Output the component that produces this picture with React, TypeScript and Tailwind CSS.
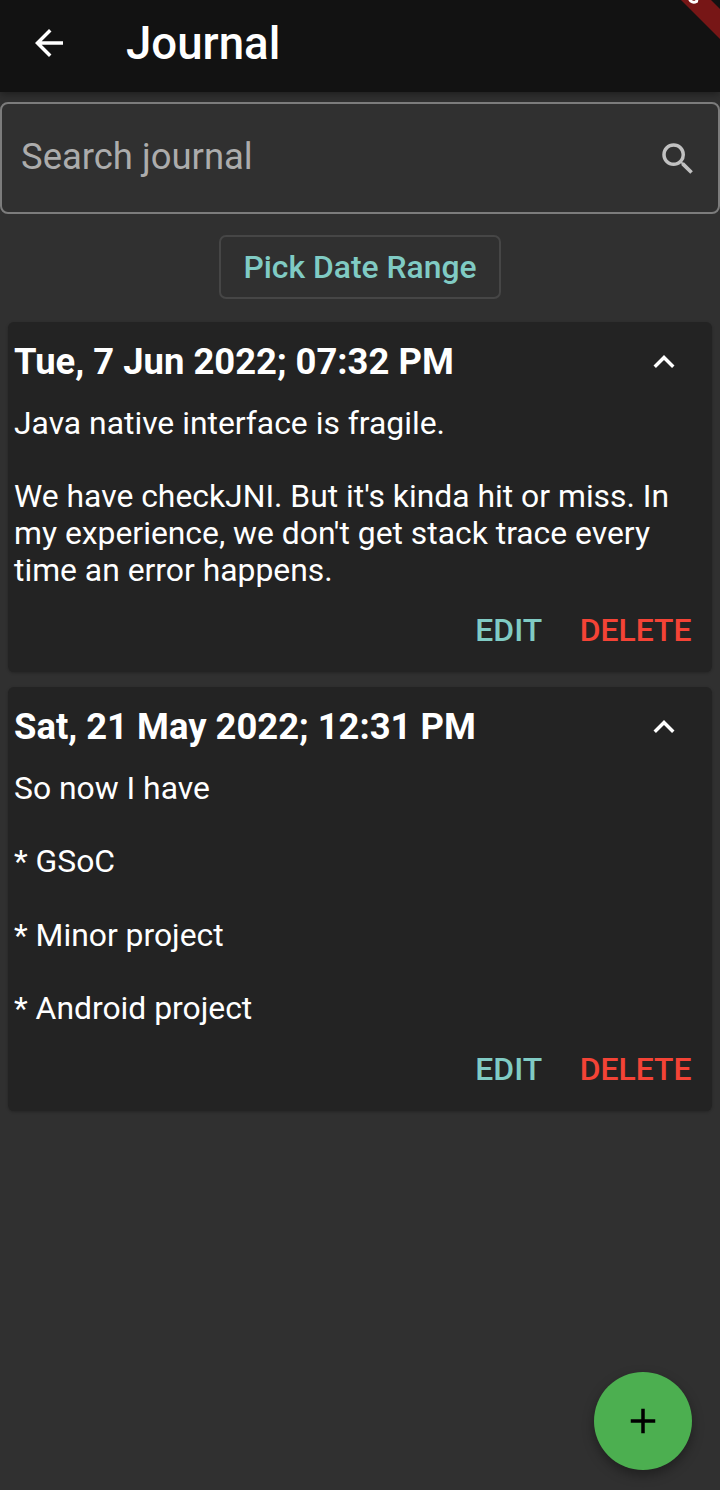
import React from "react";

type Entry = { title: string; lines: string[] };

const entries: Entry[] = [
  {
    title: "Tue, 7 Jun 2022; 07:32 PM",
    lines: [
      "Java native interface is fragile.",
      "",
      "We have checkJNI. But it's kinda hit or miss. In",
      "my experience, we don't get stack trace every",
      "time an error happens.",
    ],
  },
  {
    title: "Sat, 21 May 2022; 12:31 PM",
    lines: ["So now I have", "", "* GSoC", "", "* Minor project", "", "* Android project"],
  },
];

function EntryCard({ title, lines }: Entry) {
  return (
    <article className="rounded-[6px] bg-[#232323] pb-[10.5px] shadow-[0_1px_3px_rgba(0,0,0,0.25)]">
      <header className="flex h-[80px] items-center justify-between pl-[6px] pr-[27px]">
        <h2 className="whitespace-nowrap text-[36.42px] leading-[42px] font-bold">{title}</h2>
        <svg className="size-[42px]" viewBox="0 0 24 24" fill="currentColor">
          <path d="M12 8l-6 6 1.41 1.41L12 10.83l4.59 4.58L18 14z" />
        </svg>
      </header>
      <div className="pl-[6px] pt-[3px] text-[31.85px] leading-[36.65px]">
        {lines.map((line, i) => (
          <p key={i} className="h-[36.65px] whitespace-nowrap">{line}</p>
        ))}
      </div>
      <div className="mt-[12.5px] flex h-[61px] items-center justify-end gap-[37.5px] pr-[20.5px] text-[31.9px] font-medium">
        <button className="text-[#80cbc4]">EDIT</button>
        <button className="text-[#f44336]">DELETE</button>
      </div>
    </article>
  );
}

export default function App() {
  return (
    <div className="relative flex h-[1490px] w-[720px] flex-col overflow-hidden bg-[#303030] font-[Roboto,sans-serif] text-white">
      <header className="flex h-[92px] shrink-0 items-center bg-[#121212] pb-[6px] shadow-[0_2px_8px_rgba(0,0,0,0.4)]">
        <svg className="ml-[28px] size-[42px]" viewBox="0 0 24 24" fill="currentColor">
          <path d="M20 11H7.83l5.59-5.59L12 4l-8 8 8 8 1.41-1.41L7.83 13H20v-2z" />
        </svg>
        <h1 className="ml-[56px] pt-[2px] text-[45.6px] leading-[54px] font-medium">Journal</h1>
      </header>
      <div className="mt-[10px] flex h-[112px] shrink-0 items-center justify-between rounded-[8px] border-2 border-[#7c7c7c] pl-[19px] pr-[19px]">
        <span className="pb-[2px] text-[36.45px] text-[#acacac]">Search journal</span>
        <svg className="mt-[2px] size-[42px] text-[#c1c1c1]" viewBox="0 0 24 24" fill="currentColor">
          <path d="M15.5 14h-.79l-.28-.27A6.471 6.471 0 0 0 16 9.5 6.5 6.5 0 1 0 9.5 16c1.61 0 3.09-.59 4.23-1.57l.27.28v.79l5 4.99L20.49 19l-4.99-5zm-6 0C7.01 14 5 11.99 5 9.5S7.01 5 9.5 5 14 7.01 14 9.5 11.99 14 9.5 14z" />
        </svg>
      </div>
      <button className="mt-[21px] flex h-[64px] w-[282px] shrink-0 items-center justify-center self-center rounded-[7px] border-2 border-[#464646] pt-[2px] text-[31.85px] font-medium text-[#80cbc4]">
        Pick Date Range
      </button>
      <main className="mt-[23px] flex flex-col gap-[15px] px-[8px]">
        {entries.map((e) => (
          <EntryCard key={e.title} {...e} />
        ))}
      </main>
      <button className="absolute left-[594px] top-[1372px] flex size-[98px] items-center justify-center rounded-full bg-[#4caf50] text-black shadow-[0_5px_12px_rgba(0,0,0,0.35)]">
        <svg className="size-[42px]" viewBox="0 0 24 24" fill="currentColor">
          <path d="M19 13h-6v6h-2v-6H5v-2h6V5h2v6h6z" />
        </svg>
      </button>
      <svg className="absolute right-0 top-0 size-[60px]" viewBox="0 0 60 60">
        <path d="M21 0H51L60 9V39Z" fill="#771616" />
        <path d="M29.5 -1C30.5 2 33.5 3 36.5 1.5L37 -1" fill="none" stroke="white" strokeWidth="3" />
      </svg>
    </div>
  );
}
